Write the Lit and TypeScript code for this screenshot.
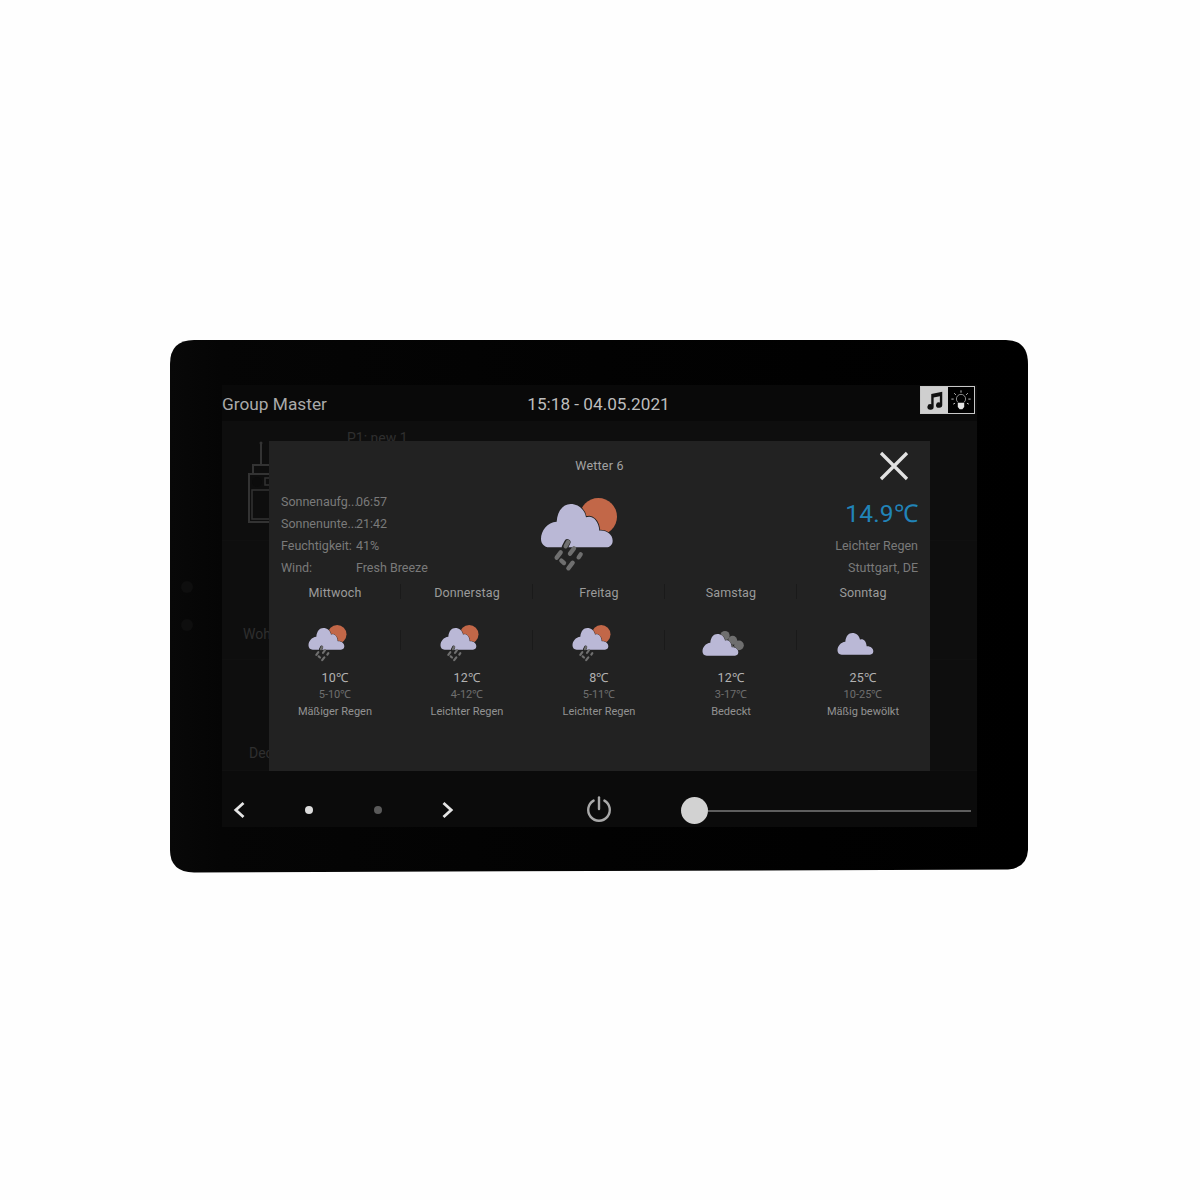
import { LitElement, html, css, svg } from "lit";
import { customElement } from "lit/decorators.js";

const cloudPath = "M58 172 C42 172 33 160 33 147 C33 122 52 97 80 95 C82 62 100 42 122 42 C145 42 164 58 168 82 C186 74 206 90 208 122 C230 120 248 134 248 152 C248 164 240 172 228 172 Z";
const sun = svg`<circle cx="205" cy="80" r="56" fill="#c26748"/>`;
const cloudHalo = svg`<path d="${cloudPath}" fill="#bab8d6" stroke="#222" stroke-width="5" paint-order="stroke"/>`;
const rain = svg`<g stroke="#6f6f6f" stroke-linecap="round" fill="none">
  <path d="M112 157 L105 171" stroke-width="19" stroke="#222"/>
  <path d="M114 156 L107 169" stroke-width="13"/>
  <path d="M92 187 L80 203" stroke-width="13"/>
  <path d="M132 175 L120 191" stroke-width="13"/>
  <path d="M152 193 L146 202" stroke-width="13"/>
  <path d="M94 212 L102 219" stroke-width="13"/>
  <path d="M128 218 L115 235" stroke-width="13"/>
</g>`;
const grayCloud = svg`<g fill="#6f6f6f"><circle cx="168" cy="52" r="28"/><circle cx="214" cy="80" r="27"/><circle cx="252" cy="110" r="29"/><path d="M150 60 L250 140 L190 150 Z"/></g>`;

function icon(kind: string, extra = "") {
  return html`<svg class="wx ${kind} ${extra}" viewBox="0 0 300 270" aria-hidden="true">
    ${kind === "rain" ? sun : ""}
    ${kind === "over" ? grayCloud : ""}
    ${cloudHalo}
    ${kind === "rain" ? rain : ""}
  </svg>`;
}

const days = [
  { name: "Mittwoch", kind: "rain", t: "10℃", r: "5-10℃", d: "Mäßiger Regen" },
  { name: "Donnerstag", kind: "rain", t: "12℃", r: "4-12℃", d: "Leichter Regen" },
  { name: "Freitag", kind: "rain", t: "8℃", r: "5-11℃", d: "Leichter Regen" },
  { name: "Samstag", kind: "over", t: "12℃", r: "3-17℃", d: "Bedeckt" },
  { name: "Sonntag", kind: "cloud", t: "25℃", r: "10-25℃", d: "Mäßig bewölkt" },
];

@customElement("app-root")
export class AppRoot extends LitElement {
  static styles = css`
    :host { display: block; min-height: 1200px; background: #fefefe; font-family: Roboto, "Liberation Sans", sans-serif; }
    * { box-sizing: border-box; }
    .page { padding: 340px 0 0 170px; }
    .device {
      width: 858px; height: 533px; padding: 45px 51px 45px 52px; position: relative;
      background: linear-gradient(90deg, #080808 0, #050505 6%, #020202 50%, #000 100%);
      clip-path: path("M24 0 H836 Q858 0 858 24 V510 Q857 528 838 529.5 L24 532.5 Q0 532 0 510 V24 Q0 0 24 0 Z");
    }
    .cam { position: absolute; left: 11px; width: 12px; height: 12px; border-radius: 50%; background: #0e0e0e; }
    .cam.a { top: 241px; }
    .cam.b { top: 279px; }
    .screen { width: 755px; height: 442px; background: #0c0c0c; display: flex; flex-direction: column; position: relative; }
    .head { height: 36px; flex: none; display: grid; grid-template-columns: 1fr auto 1fr; align-items: start; background: #090909; }
    .brand { font-size: 17.3px; line-height: 38px; color: #aaa; }
    .time { font-size: 17.2px; line-height: 38px; color: #bdbdbd; margin-right: 2px; }
    .toggle { justify-self: end; margin: 1px 2px 0 0; width: 55px; height: 28px; display: flex; border: 1px solid #c8c8c8; background: #000; }
    .toggle > div { flex: 1; display: flex; align-items: center; justify-content: center; }
    .toggle .on { background: #cfcfcf; }
    .toggle svg { width: 22px; height: 22px; }
    .back { height: 350px; flex: none; display: grid; grid-template-rows: 120px 119px 111px; background: #0e0e0e; }
    .tile { border-bottom: 1px solid #101010; color: #2f2f2f; font-size: 14px; }
    .t1 { display: flex; padding-left: 26px; gap: 51px; overflow: hidden; }
    .t1 svg { width: 48px; height: 84px; margin-top: 20px; flex: none; }
    .t1 span { margin-top: 9px; }
    .t2 { padding: 85px 0 0 21px; }
    .t3 { padding: 85px 0 0 27px; }
    .foot { flex: 1; display: grid; grid-template-columns: 12px 60px 8px 61px 8px 60px 12px 132px 26px 69px 1fr; align-items: center; padding: 22px 6px 0 11px; background: #0b0b0b; }
    .chev { width: 12px; height: 18px; }
    .dot { width: 8px; height: 8px; border-radius: 50%; background: #dcdcdc; }
    .dot.off { background: #5a5a5a; }
    .gap { display: block; }
    .power { width: 26px; height: 26px; overflow: visible; }
    .slider { display: flex; align-items: center; }
    .thumb { width: 27px; height: 27px; border-radius: 50%; background: #d2d2d2; flex: none; }
    .track { flex: 1; height: 2px; background: #5e5e5e; margin-top: 2px; }
    .modal { position: absolute; left: 47px; top: 56px; width: 661px; height: 330px; background: #222; display: flex; flex-direction: column; }
    .mhead { height: 50px; flex: none; display: grid; grid-template-columns: 1fr auto 1fr; padding: 0 12px; }
    .title { font-size: 12.5px; line-height: 50px; color: #a3a3a3; letter-spacing: 0.2px; }
    .close { justify-self: end; width: 30px; height: 30px; margin: 10px 9px 0 0; }
    .body { height: 90px; flex: none; display: grid; grid-template-columns: 1fr auto 1fr; padding: 0 12px; }
    .info { display: grid; grid-template-columns: 75px auto; grid-auto-rows: 22px; align-content: start; font-size: 12.5px; line-height: 22px; color: #7a7a7a; white-space: nowrap; }
    .wx { width: 50px; height: 45px; flex: none; display: block; }
    .wx.rain { margin: 17px 14px 0 0; }
    .wx.over { margin: 23px 18px 0 0; }
    .wx.cloud { margin: 22px 12px 0 0; }
    .wx.now { width: 100px; height: 90px; margin: -1px 19.5px 0 -19.5px; }
    .right { text-align: right; font-size: 12.5px; line-height: 22px; color: #7a7a7a; }
    .temp { font-size: 24.5px; line-height: 46px; height: 44px; color: #2184b8; letter-spacing: 0.2px; }
    .days { display: grid; grid-template-columns: repeat(5, 132px); }
    .day { position: relative; text-align: center; }
    .day:not(:last-child)::before, .day:not(:last-child)::after { content: ""; position: absolute; right: 0; width: 1px; background: #1a1a1a; }
    .day::before { top: 3px; height: 15px; }
    .day::after { top: 49px; height: 20px; }
    .name { font-size: 12.5px; line-height: 23px; color: #9b9b9b; letter-spacing: 0.12px; }
    .iconbox { height: 64px; display: flex; flex-direction: column; align-items: center; }
    .t { font-size: 12.5px; line-height: 20px; margin-bottom: 1px; color: #b2b2b2; letter-spacing: 0.3px; }
    .r { font-size: 11px; line-height: 12px; color: #6f6f6f; }
    .d { font-size: 11px; line-height: 16px; margin-top: 3px; color: #929292; }
  `;

  render() {
    return html`
      <div class="page">
        <div class="device">
          <div class="cam a"></div>
          <div class="cam b"></div>
          <div class="screen">
            <div class="head">
              <div class="brand">Group Master</div>
              <div class="time">15:18 - 04.05.2021</div>
              <div class="toggle">
                <div class="on">
                  <svg viewBox="0 0 24 24"><path d="M9 5.5 L21 3 V17.5 A3.4 3 0 1 1 18.4 14.6 V8 L11.6 9.4 V19.5 A3.4 3 0 1 1 9 16.6 Z" fill="#111"/></svg>
                </div>
                <div>
                  <svg viewBox="0 0 24 24" fill="none" stroke="#cfcfcf" stroke-width="1">
                    <path d="M8.6 14.5 A5 5 0 1 1 15.4 14.5" stroke="#999"/>
                    <path d="M12 1.5V4 M4.6 4.6L6.4 6.4 M19.4 4.6L17.6 6.4 M1.5 11H4 M20 11H22.5 M3.5 16.5L5.5 15.5 M20.5 16.5L18.5 15.5"/>
                    <path d="M8.5 15H15.5V19.5L13.5 22H10.5L8.5 19.5Z" fill="#e4e4e4" stroke="none"/>
                  </svg>
                </div>
              </div>
            </div>
            <div class="back">
              <div class="tile t1">
                <svg viewBox="0 0 48 84" fill="none" stroke="#333" stroke-width="2">
                  <circle cx="13" cy="2" r="1.5" fill="#333" stroke="none"/>
                  <path d="M13 2V24"/>
                  <rect x="5" y="24" width="30" height="9"/>
                  <rect x="1" y="33" width="46" height="48"/>
                  <rect x="4" y="49" width="40" height="29" stroke-width="1.5"/>
                  <circle cx="9" cy="41" r="5" fill="#0c0c0c" stroke="none"/>
                  <rect x="17" y="37" width="6" height="7" stroke-width="1.5"/>
                </svg>
                <span>P1: new 1</span>
              </div>
              <div class="tile t2">Wohnzimmer</div>
              <div class="tile t3">Decke</div>
            </div>
            <div class="foot">
              <svg class="chev" viewBox="0 0 12 18" fill="none" stroke="#e4e4e4" stroke-width="2.8"><path d="M10.5 2 L2.8 9 L10.5 16"/></svg>
              <span class="gap"></span>
              <div class="dot"></div>
              <span class="gap"></span>
              <div class="dot off"></div>
              <span class="gap"></span>
              <svg class="chev" viewBox="0 0 12 18" fill="none" stroke="#e4e4e4" stroke-width="2.8"><path d="M1.5 2 L9.2 9 L1.5 16"/></svg>
              <span class="gap"></span>
              <svg class="power" viewBox="0 0 26 26" fill="none" stroke="#a8a8a8" stroke-width="2.4" stroke-linecap="round"><path d="M13 0.5V12"/><path d="M7.6 3.6 A10.8 10.8 0 1 0 18.4 3.6"/></svg>
              <span class="gap"></span>
              <div class="slider"><div class="thumb"></div><div class="track"></div></div>
            </div>
            <div class="modal">
              <div class="mhead">
                <span></span>
                <div class="title">Wetter 6</div>
                <svg class="close" viewBox="0 0 30 30" fill="none" stroke="#e2e2e2" stroke-width="3.3"><path d="M2 2 L28 28 M28 2 L2 28"/></svg>
              </div>
              <div class="body">
                <div class="info">
                  <span>Sonnenaufg...</span><span>06:57</span>
                  <span>Sonnenunte...</span><span>21:42</span>
                  <span>Feuchtigkeit:</span><span>41%</span>
                  <span>Wind:</span><span>Fresh Breeze</span>
                </div>
                ${icon("rain", "now")}
                <div class="right">
                  <div class="temp">14.9℃</div>
                  <div>Leichter Regen</div>
                  <div>Stuttgart, DE</div>
                </div>
              </div>
              <div class="days">
                ${days.map((x) => html`
                  <div class="day">
                    <div class="name">${x.name}</div>
                    <div class="iconbox">${icon(x.kind)}</div>
                    <div class="t">${x.t}</div>
                    <div class="r">${x.r}</div>
                    <div class="d">${x.d}</div>
                  </div>`)}
              </div>
            </div>
          </div>
        </div>
      </div>
    `;
  }
}
